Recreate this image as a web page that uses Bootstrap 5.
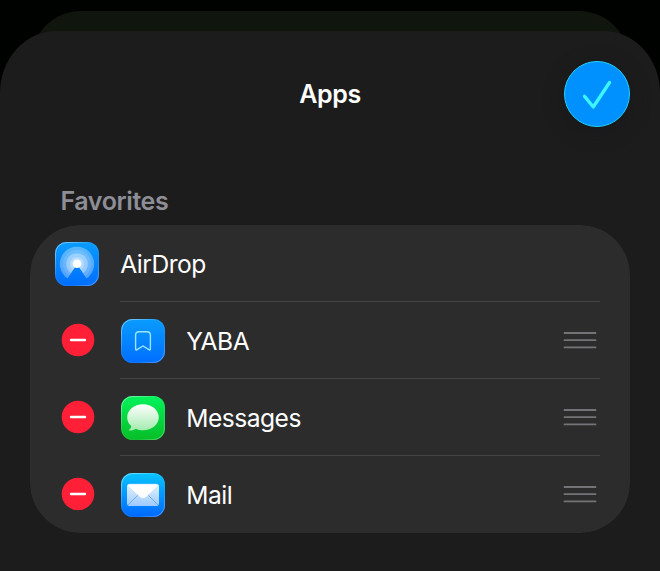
<!DOCTYPE html>
<html lang="en" data-bs-theme="dark">
<head>
<meta charset="utf-8">
<meta name="viewport" content="width=device-width, initial-scale=1">
<title>Apps</title>
<link href="https://cdn.jsdelivr.net/npm/bootstrap@5.3.0/dist/css/bootstrap.min.css" rel="stylesheet">
<style>
body{background:#000200;font-family:Inter,"Liberation Sans",sans-serif;height:571px}
.back-sheet{height:50px;margin:11px 31px 0;background:#10150e;border-radius:50px 50px 0 0}
.sheet{height:540px;margin-top:-30px;background:#1c1c1c;border-radius:56px 56px 0 0/62px 62px 0 0;padding:30px 30px 0}
.sheet-head{display:grid;grid-template-columns:66px 1fr 66px;height:66px}
.sheet-title{font-size:25px;font-weight:600;color:#fff;letter-spacing:-.4px;line-height:30px}
.done{width:66px;height:66px;background:#0091ff;border:1.5px solid #1fd3fb;box-shadow:0 4px 18px 4px rgba(24,24,34,.3)}
.section-label{font-size:25px;font-weight:600;line-height:30px;color:#8e8e96;letter-spacing:-.4px;margin:59px 0 9px 30.5px}
.apps{--bs-list-group-bg:#2c2c2c;--bs-list-group-border-width:0;--bs-list-group-border-radius:50px;overflow:hidden}
.app-row{height:77px;padding:0 30px 0 25px;position:relative;color:#fff;font-size:24.6px}
.app-row+.app-row{padding-left:31px}
.app-row:not(:last-child)::after{content:"";position:absolute;left:90px;right:30px;bottom:0;height:1.5px;background:#454546}
.remove{width:34px;height:34px;margin:0 26px 1px 0}
.app-icon{width:44px;height:44px;margin-right:21.2px}
.grip{width:34px;height:20px;margin:0 3px 1px 0}
.app-name{line-height:30px;letter-spacing:-.5px}
svg{display:block;flex:none}
</style>
<script src="https://cdn.jsdelivr.net/npm/bootstrap@5.3.0/dist/js/bootstrap.bundle.min.js"></script>
</head>
<body class="overflow-hidden">
<svg width="0" height="0" class="position-absolute" aria-hidden="true">
  <defs>
    <linearGradient id="blue" x2="0" y2="1"><stop stop-color="#0a9cff"/><stop offset="1" stop-color="#006eff"/></linearGradient>
    <linearGradient id="sky" x2="0" y2="1"><stop stop-color="#08c4ff"/><stop offset="1" stop-color="#0068ff"/></linearGradient>
    <linearGradient id="green" x2="0" y2="1"><stop stop-color="#04f35c"/><stop offset="1" stop-color="#07bd27"/></linearGradient>
    <linearGradient id="rim" x2="1" y2="1"><stop stop-color="#fff" stop-opacity=".55"/><stop offset=".4" stop-color="#fff" stop-opacity=".08"/><stop offset=".7" stop-color="#fff" stop-opacity=".05"/><stop offset="1" stop-color="#fff" stop-opacity=".4"/></linearGradient>
    <linearGradient id="bubble" x2="0" y2="1"><stop stop-color="#fff"/><stop offset="1" stop-color="#a3ebae"/></linearGradient>
    <linearGradient id="paper" x2="0" y2="1"><stop stop-color="#e4f4ff"/><stop offset="1" stop-color="#9dc9ff"/></linearGradient>
    <symbol id="minus" viewBox="0 0 34 34"><circle cx="17" cy="17" r="16.3" fill="#ff2038"/><path d="M10 17H24" stroke="#fff" stroke-width="2.4" stroke-linecap="round"/></symbol>
    <symbol id="lines" viewBox="0 0 34 20"><path d="M1.5 3H32.5M1.5 10.2H32.5M1.5 17.4H32.5" stroke="#747478" stroke-width="1.8" stroke-linecap="round"/></symbol>
    <clipPath id="fan"><path d="M0 0H44V37H31.8L22 22L12.2 37H0Z"/></clipPath>
  </defs>
</svg>
<div class="back-sheet"></div>
<main class="sheet position-relative">
  <header class="sheet-head align-items-center text-center">
    <span></span>
    <h1 class="sheet-title m-0">Apps</h1>
    <button class="done btn rounded-circle p-0 d-flex align-items-center justify-content-center" type="button" aria-label="Done">
      <svg width="66" height="66" viewBox="0 0 66 66" fill="none" stroke="#3cf6ff" stroke-width="3.3" stroke-linecap="round" stroke-linejoin="round"><path d="M20.5 35.2L29.3 46L45.5 21.5"/></svg>
    </button>
  </header>
  <h2 class="section-label">Favorites</h2>
  <ul class="apps list-group">
    <li class="app-row list-group-item d-flex align-items-center">
      <svg class="app-icon" viewBox="0 0 44 44">
        <rect width="44" height="44" rx="11.5" fill="url(#blue)"/>
        <g clip-path="url(#fan)" fill="#fff">
          <circle cx="22" cy="22" r="17.2" fill-opacity=".32"/>
          <circle cx="22" cy="22" r="14" fill-opacity=".12"/>
          <circle cx="22" cy="22" r="10.8" fill-opacity=".32"/>
          <circle cx="22" cy="22" r="7" fill-opacity=".3"/>
        </g>
        <circle cx="22" cy="21.8" r="4.3" fill="#fff"/>
        <rect x=".5" y=".5" width="43" height="43" rx="11" fill="none" stroke="url(#rim)"/>
      </svg>
      <span class="app-name">AirDrop</span>
    </li>
    <li class="app-row list-group-item d-flex align-items-center">
      <svg class="remove"><use href="#minus"/></svg>
      <svg class="app-icon" viewBox="0 0 44 44">
        <rect width="44" height="44" rx="11.5" fill="url(#blue)"/>
        <path d="M14.6 16.2Q14.6 12.8 18 12.8H26Q29.4 12.8 29.4 16.2V30Q29.4 31.6 28 30.6L22 27L16 30.6Q14.6 31.6 14.6 30Z" fill="none" stroke="#9be6ff" stroke-width="1.4"/>
        <rect x=".5" y=".5" width="43" height="43" rx="11" fill="none" stroke="url(#rim)"/>
      </svg>
      <span class="app-name">YABA</span>
      <svg class="grip ms-auto"><use href="#lines"/></svg>
    </li>
    <li class="app-row list-group-item d-flex align-items-center">
      <svg class="remove"><use href="#minus"/></svg>
      <svg class="app-icon" viewBox="0 0 44 44">
        <rect width="44" height="44" rx="11.5" fill="url(#green)"/>
        <path d="M22 8.2C30.9 8.2 37.8 13.9 37.8 21.2S30.9 34.2 22 34.2C19.3 34.2 17 33.8 15 32.7C13 34 10.5 34.6 8.6 34.5C7.9 34.4 7.9 33.8 8.4 33.4C9.7 32.4 10.3 31.1 10.2 29.9C7.6 27.8 6.2 24.8 6.2 21.2C6.2 13.9 13.1 8.2 22 8.2Z" fill="url(#bubble)"/>
        <rect x=".5" y=".5" width="43" height="43" rx="11" fill="none" stroke="url(#rim)"/>
      </svg>
      <span class="app-name">Messages</span>
      <svg class="grip ms-auto"><use href="#lines"/></svg>
    </li>
    <li class="app-row list-group-item d-flex align-items-center">
      <svg class="remove"><use href="#minus"/></svg>
      <svg class="app-icon" viewBox="0 0 44 44">
        <rect width="44" height="44" rx="11.5" fill="url(#sky)"/>
        <rect x="6" y="11" width="32" height="22" rx="2.8" fill="url(#paper)"/>
        <path d="M7 32L17.5 21.5M37 32L26.5 21.5" stroke="#5da8ff" stroke-width=".9"/>
        <path d="M6.4 12.7Q7 11 9 11H35Q37 11 37.6 12.7L25.6 23.8Q22 26.9 18.4 23.8Z" fill="#fff" stroke="#a8d3ff" stroke-width=".5"/>
        <rect x=".5" y=".5" width="43" height="43" rx="11" fill="none" stroke="url(#rim)"/>
      </svg>
      <span class="app-name">Mail</span>
      <svg class="grip ms-auto"><use href="#lines"/></svg>
    </li>
  </ul>
</main>
</body>
</html>
